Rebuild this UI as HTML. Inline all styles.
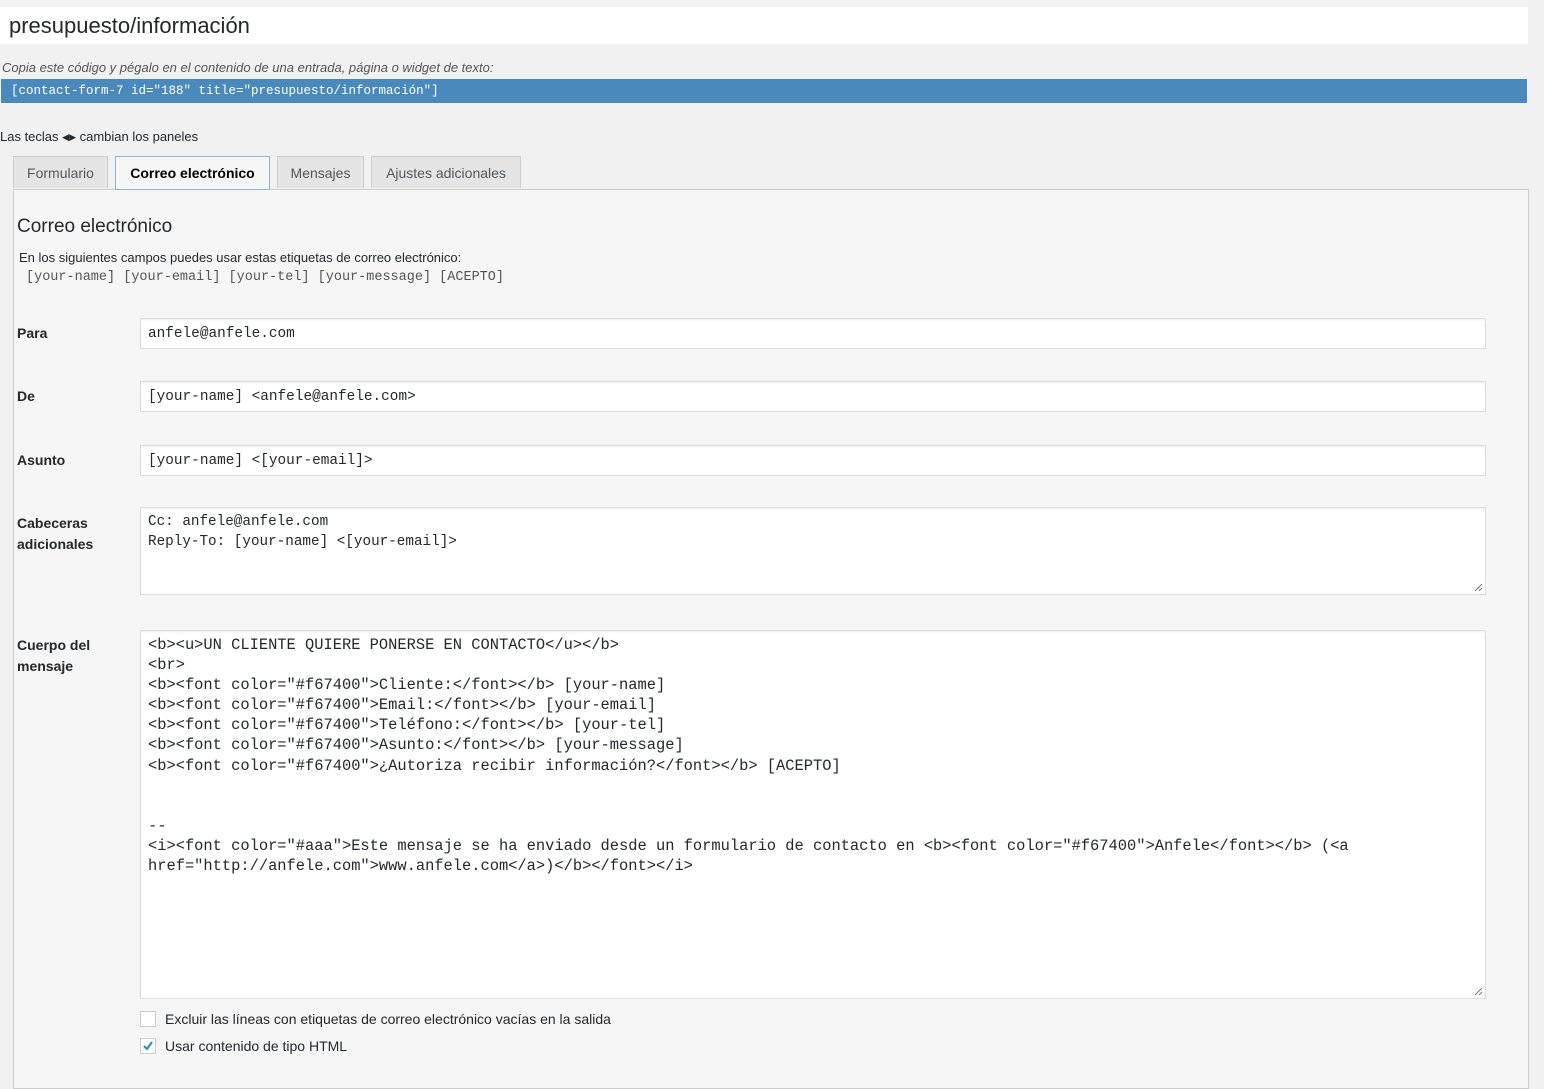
<!DOCTYPE html>
<html><head><meta charset="utf-8"><style>
body{margin:0;width:1544px;height:1080px;background:#f1f1f1;font-family:"Liberation Sans",sans-serif;color:#23282d;position:relative;overflow:hidden}
.a{position:absolute}
.mono{font-family:"Liberation Mono",monospace}
.inp{position:absolute;left:140px;width:1346px;background:#fff;border:1px solid #ddd;box-shadow:inset 0 1px 2px rgba(0,0,0,.07);box-sizing:border-box}
.lbl{position:absolute;left:17px;font-size:14px;font-weight:bold;line-height:21px;color:#23282d}
.tab{position:absolute;top:156px;height:32px;border:1px solid #ccc;border-bottom:none;background:#e5e5e5;font-size:14px;line-height:32px;color:#50575e;text-align:center;box-sizing:border-box}
.grip{position:absolute;right:2px;bottom:2px;width:10px;height:10px}
</style></head><body>
<div class="a" style="left:0;top:7px;width:1528px;height:37px;background:#fff;"></div>
<div class="a" style="left:9px;top:12px;font-size:22px;line-height:28px;color:#23282d">presupuesto/información</div>
<div class="a" style="left:2px;top:59px;font-size:13px;font-style:italic;color:#555;line-height:17px">Copia este código y pégalo en el contenido de una entrada, página o widget de texto:</div>
<div class="a mono" style="left:1px;top:79px;width:1526px;height:24px;background:#4a89bb;color:#fff;font-size:12.5px;line-height:24px;padding-left:10px;box-sizing:border-box">[contact-form-7 id="188" title="presupuesto/información"]</div>
<div class="a" style="left:0;top:128px;font-size:13px;line-height:17px;color:#23282d">Las teclas <span style="font-size:9px;position:relative;top:-1px">◀▶</span> cambian los paneles</div>
<div class="a" style="left:13px;top:189px;width:1516px;height:900px;background:#f6f6f6;border:1px solid #ccc;box-sizing:border-box"></div>
<div class="tab" style="left:13px;width:95px">Formulario</div>
<div class="tab" style="left:115px;width:155px;height:34px;background:#f6f6f6;border:1px solid #8eb4d8;color:#000;font-weight:bold;z-index:2">Correo electrónico</div>
<div class="tab" style="left:277px;width:87px">Mensajes</div>
<div class="tab" style="left:371px;width:150px">Ajustes adicionales</div>
<div class="a" style="left:17px;top:215px;font-size:19px;line-height:24px;color:#23282d">Correo electrónico</div>
<div class="a" style="left:19px;top:249px;font-size:13px;line-height:17px;color:#23282d">En los siguientes campos puedes usar estas etiquetas de correo electrónico:</div>
<div class="a mono" style="left:26px;top:269px;font-size:13.5px;line-height:17px;color:#555">[your-name] [your-email] [your-tel] [your-message] [ACEPTO]</div>

<div class="lbl" style="top:323px">Para</div>
<div class="inp mono" style="top:318px;height:31px;font-size:14.4px;line-height:31px;padding-left:7px">anfele@anfele.com</div>
<div class="lbl" style="top:386px">De</div>
<div class="inp mono" style="top:381px;height:31px;font-size:14.4px;line-height:31px;padding-left:7px">[your-name] &lt;anfele@anfele.com&gt;</div>
<div class="lbl" style="top:450px">Asunto</div>
<div class="inp mono" style="top:445px;height:31px;font-size:14.4px;line-height:31px;padding-left:7px">[your-name] &lt;[your-email]&gt;</div>
<div class="lbl" style="top:513px">Cabeceras<br>adicionales</div>
<div class="inp mono" style="top:507px;height:88px;font-size:14.3px;line-height:20px;padding:4px 7px;white-space:pre">Cc: anfele@anfele.com
Reply-To: [your-name] &lt;[your-email]&gt;<svg class="grip" viewBox="0 0 10 10"><path d="M9 2L2 9M9 6L6 9" stroke="#777" stroke-width="1"/></svg></div>
<div class="lbl" style="top:635px">Cuerpo del<br>mensaje</div>
<div class="inp mono" style="top:630px;height:369px;font-size:15.4px;line-height:20.1px;padding:4px 7px;white-space:pre;color:#23282d">&lt;b&gt;&lt;u&gt;UN CLIENTE QUIERE PONERSE EN CONTACTO&lt;/u&gt;&lt;/b&gt;
&lt;br&gt;
&lt;b&gt;&lt;font color="#f67400"&gt;Cliente:&lt;/font&gt;&lt;/b&gt; [your-name]
&lt;b&gt;&lt;font color="#f67400"&gt;Email:&lt;/font&gt;&lt;/b&gt; [your-email]
&lt;b&gt;&lt;font color="#f67400"&gt;Teléfono:&lt;/font&gt;&lt;/b&gt; [your-tel]
&lt;b&gt;&lt;font color="#f67400"&gt;Asunto:&lt;/font&gt;&lt;/b&gt; [your-message]
&lt;b&gt;&lt;font color="#f67400"&gt;¿Autoriza recibir información?&lt;/font&gt;&lt;/b&gt; [ACEPTO]


--
&lt;i&gt;&lt;font color="#aaa"&gt;Este mensaje se ha enviado desde un formulario de contacto en &lt;b&gt;&lt;font color="#f67400"&gt;Anfele&lt;/font&gt;&lt;/b&gt; (&lt;a
href="http://anfele.com"&gt;www.anfele.com&lt;/a&gt;)&lt;/b&gt;&lt;/font&gt;&lt;/i&gt;<svg class="grip" viewBox="0 0 10 10"><path d="M9 2L2 9M9 6L6 9" stroke="#777" stroke-width="1"/></svg></div>

<div class="a" style="left:140px;top:1011px;width:16px;height:16px;background:#fff;border:1px solid #ccc;box-sizing:border-box"></div>
<div class="a" style="left:165px;top:1011px;font-size:14px;line-height:17px;color:#23282d">Excluir las líneas con etiquetas de correo electrónico vacías en la salida</div>
<div class="a" style="left:140px;top:1038px;width:16px;height:16px;background:#fff;border:1px solid #ccc;box-sizing:border-box"><svg width="14" height="14" viewBox="0 0 14 14" style="position:absolute;left:0;top:0"><path d="M3 7L6 10L11 3" stroke="#1e8cbe" stroke-width="2" fill="none"/></svg></div>
<div class="a" style="left:165px;top:1038px;font-size:14px;line-height:17px;color:#23282d">Usar contenido de tipo HTML</div>
</body></html>
